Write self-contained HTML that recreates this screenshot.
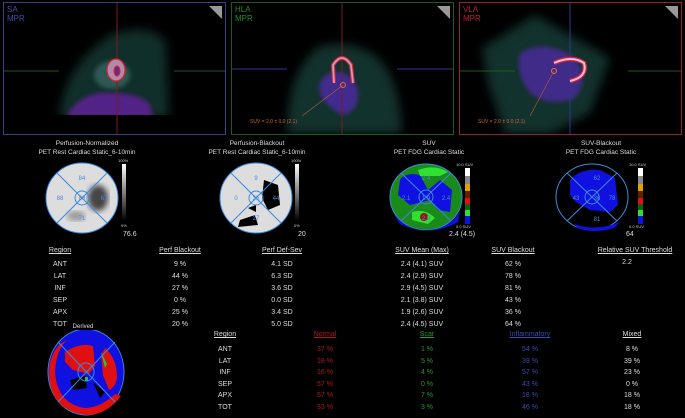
<!DOCTYPE html>
<html><head><meta charset="utf-8"><style>
body{margin:0;width:685px;height:418px;background:#000;overflow:hidden;position:relative;font-family:"Liberation Sans",sans-serif;color:#ddd;font-size:7px}
.a{position:absolute;white-space:nowrap}
.c{position:absolute;transform:translateX(-50%);white-space:nowrap;text-align:center}
.p{position:absolute;top:2px;height:131px;overflow:hidden;background:#000}
.u{text-decoration:underline}
</style></head><body>
<div class="p" style="left:3px;width:221px;border:1px solid #3b3f86">
<svg width="221" height="131">
<defs><filter id="b"><feGaussianBlur stdDeviation="5"/></filter><filter id="b2"><feGaussianBlur stdDeviation="2"/></filter></defs>
<path d="M55,115 Q60,60 110,30 Q150,20 162,40 L165,115 Z" fill="#123a36" opacity=".8" filter="url(#b)"/>
<path d="M62,115 Q70,95 95,90 Q130,88 145,100 L150,115 Z" fill="#5a2090" opacity=".9" filter="url(#b2)"/>
<ellipse cx="108" cy="72" rx="18" ry="14" fill="#3a6a68" opacity=".7" filter="url(#b2)"/>
<rect x="40" y="112" width="140" height="20" fill="#000"/>
<line x1="113" y1="0" x2="113" y2="131" stroke="#7a1a2a"/>
<line x1="0" y1="68" x2="55" y2="68" stroke="#1e5a1e"/><line x1="170" y1="68" x2="221" y2="68" stroke="#1e5a1e"/>
<ellipse cx="112" cy="67" rx="9" ry="11" fill="#b08aa8" stroke="#e02030" stroke-width="1.2"/>
<ellipse cx="113" cy="68" rx="3" ry="5" fill="#6a2a8a" stroke="#e02030"/>
<polygon points="205,3 218,3 218,16" fill="#999"/>
</svg>
<div class="a" style="left:3px;top:2px;color:#4a4ab0;font-size:8px;line-height:9px">SA<br>MPR</div></div>
<div class="p" style="left:231px;width:221px;border:1px solid #1e5a1e">
<svg width="221" height="131">
<path d="M55,131 Q55,70 85,45 Q110,35 140,50 Q168,70 170,131 Z" fill="#123a36" opacity=".85" filter="url(#b)"/>
<path d="M88,80 Q95,65 112,70 Q130,80 125,100 Q115,120 100,105 Q85,95 88,80 Z" fill="#4a2a98" opacity=".9" filter="url(#b2)"/>
<line x1="110" y1="0" x2="110" y2="131" stroke="#7a1a2a"/>
<line x1="0" y1="66" x2="55" y2="66" stroke="#2a3a90"/><line x1="165" y1="66" x2="221" y2="66" stroke="#2a3a90"/>
<path d="M102,80 L101,62 Q110,48 119,62 L121,80" fill="none" stroke="#e02030" stroke-width="4"/>
<path d="M102,80 L101,62 Q110,48 119,62 L121,80" fill="none" stroke="#c0a0c8" stroke-width="1.8"/>
<circle cx="111" cy="82" r="2.5" fill="none" stroke="#e07050"/>
<line x1="111" y1="82" x2="70" y2="113" stroke="#b06040" stroke-width=".6"/>
<text x="18" y="120" fill="#d06040" font-size="5">SUV = 2.0 ± 0.0 (2.1)</text>
<polygon points="205,3 218,3 218,16" fill="#999"/>
</svg>
<div class="a" style="left:3px;top:2px;color:#2a8a2a;font-size:8px;line-height:9px">HLA<br>MPR</div></div>
<div class="p" style="left:459px;width:221px;border:1px solid #9a2030">
<svg width="221" height="131">
<polygon points="22,45 75,12 150,55 130,110 90,131 45,131 28,80" fill="#123a36" opacity=".85" filter="url(#b)"/>
<path d="M60,50 Q85,35 115,55 Q130,75 115,95 Q90,105 70,90 Q55,70 60,50 Z" fill="#4a2a98" opacity=".85" filter="url(#b2)"/>
<line x1="110" y1="0" x2="110" y2="131" stroke="#2a3a90"/>
<line x1="0" y1="68" x2="55" y2="68" stroke="#1e5a1e"/><line x1="168" y1="68" x2="221" y2="68" stroke="#1e5a1e"/>
<path d="M94,60 Q112,52 124,60 Q128,74 110,78" fill="none" stroke="#e02030" stroke-width="4.5"/>
<path d="M94,60 Q112,52 124,60 Q128,74 110,78" fill="none" stroke="#e0c0e0" stroke-width="2"/>
<circle cx="94" cy="68" r="2.5" fill="none" stroke="#e07050"/>
<line x1="94" y1="68" x2="70" y2="113" stroke="#b06040" stroke-width=".6"/>
<text x="18" y="120" fill="#d06040" font-size="5">SUV = 2.0 ± 0.0 (2.1)</text>
<polygon points="205,3 218,3 218,16" fill="#999"/>
</svg>
<div class="a" style="left:3px;top:2px;color:#c02030;font-size:8px;line-height:9px">VLA<br>MPR</div></div>

<div class="c" style="left:87px;top:139px;line-height:9px;font-size:6.5px">Perfusion-Normalized<br>PET Rest Cardiac Static_6-10min</div>
<div class="c" style="left:257px;top:139px;line-height:9px;font-size:6.5px">Perfusion-Blackout<br>PET Rest Cardiac Static_6-10min</div>
<div class="c" style="left:429px;top:139px;line-height:9px;font-size:6.5px">SUV<br>PET FDG Cardiac Static</div>
<div class="c" style="left:601px;top:139px;line-height:9px;font-size:6.5px">SUV-Blackout<br>PET FDG Cardiac Static</div>

<svg class="a" style="left:0;top:150px" width="685" height="90">
<defs><filter id="s"><feGaussianBlur stdDeviation="3"/></filter>
<linearGradient id="g" x1="0" y1="0" x2="0" y2="1"><stop offset="0" stop-color="#fff"/><stop offset="1" stop-color="#000"/></linearGradient></defs>
<g stroke="#3a8ae0" stroke-width="1">
<ellipse cx="82" cy="48" rx="36" ry="35" fill="#ddd"/>
<ellipse cx="98" cy="48" rx="10" ry="13" fill="#444" filter="url(#s)" stroke="none"/>
<ellipse cx="76" cy="66" rx="9" ry="5" fill="#999" filter="url(#s)" stroke="none"/>
<line x1="57" y1="23" x2="107" y2="73"/><line x1="107" y1="23" x2="57" y2="73"/><ellipse cx="82" cy="48" rx="7" ry="7" fill="none"/>
<ellipse cx="256" cy="48" rx="36" ry="35" fill="#ddd"/>
<path d="M264,30 L278,35 L280,55 L268,60 L262,48 Z M240,70 L255,65 L258,75 L238,77 Z M248,58 L256,55 L256,62 Z" fill="#000" stroke="none"/>
<line x1="231" y1="23" x2="281" y2="73"/><line x1="281" y1="23" x2="231" y2="73"/><ellipse cx="256" cy="48" rx="7" ry="7" fill="none"/>
<ellipse cx="426" cy="47" rx="36" ry="33" fill="#1a8a1a"/>
<path d="M400,30 Q405,22 420,25 L428,40 L440,30 L452,40 L450,62 L438,60 L430,50 L410,55 L398,45 Z" fill="#1010e0" stroke="none"/>
<path d="M418,20 Q435,14 448,22 L440,26 L420,26 Z" fill="#30e030" stroke="none"/>
<path d="M412,62 Q425,58 435,68 L428,74 L412,70 Z" fill="#30e030" stroke="none"/>
<ellipse cx="424" cy="67" rx="4" ry="4" fill="#a01010" stroke="none"/>
<path d="M392,62 Q405,80 426,80 Q448,80 460,62 L458,72 Q430,88 400,74 Z" fill="#1010e0" stroke="none"/>
<line x1="401" y1="23" x2="451" y2="71"/><line x1="451" y1="23" x2="401" y2="71"/><ellipse cx="426" cy="47" rx="7" ry="7" fill="none"/>
<ellipse cx="592" cy="47" rx="36" ry="33" fill="#000"/>
<path d="M570,30 Q580,18 600,20 L615,28 L618,55 L610,62 L590,60 L576,52 L570,45 Z M575,74 Q595,82 620,72 L614,78 Q595,84 577,78 Z" fill="#1010e0" stroke="none"/>
<line x1="567" y1="23" x2="617" y2="71"/><line x1="617" y1="23" x2="567" y2="71"/><ellipse cx="592" cy="47" rx="7" ry="7" fill="none"/>
</g>
<g fill="#4a8ae0" font-size="6" text-anchor="middle">
<text x="82" y="30">84</text><text x="60" y="50">88</text><text x="82" y="50">88</text><text x="104" y="50">67</text><text x="82" y="70">71</text>
<text x="256" y="30">9</text><text x="236" y="50">0</text><text x="256" y="50">35</text><text x="276" y="50">44</text><text x="256" y="70">27</text>
<text x="426" y="30">2.4</text><text x="406" y="50">2.1</text><text x="426" y="50">1.9</text><text x="446" y="50">2.4</text><text x="426" y="70">2.9</text>
<text x="597" y="30">62</text><text x="576" y="50">43</text><text x="597" y="50">36</text><text x="612" y="50">78</text><text x="597" y="71">81</text>
</g>
<rect x="122" y="14" width="4" height="57" fill="url(#g)"/>
<rect x="295" y="14" width="4" height="57" fill="url(#g)"/>
<g><rect x="465" y="18" width="5" height="8" fill="#fff"/><rect x="465" y="26" width="5" height="8" fill="#888"/><rect x="465" y="34" width="5" height="7" fill="#e0a000"/><rect x="465" y="41" width="5" height="7" fill="#602000"/><rect x="465" y="48" width="5" height="6" fill="#e01010"/><rect x="465" y="54" width="5" height="6" fill="#106010"/><rect x="465" y="60" width="5" height="6" fill="#30e030"/><rect x="465" y="66" width="5" height="8" fill="#1010e0"/></g>
<g><rect x="638" y="18" width="5" height="8" fill="#fff"/><rect x="638" y="26" width="5" height="8" fill="#888"/><rect x="638" y="34" width="5" height="7" fill="#e0a000"/><rect x="638" y="41" width="5" height="7" fill="#602000"/><rect x="638" y="48" width="5" height="6" fill="#e01010"/><rect x="638" y="54" width="5" height="6" fill="#106010"/><rect x="638" y="60" width="5" height="6" fill="#30e030"/><rect x="638" y="66" width="5" height="8" fill="#1010e0"/></g>
<g fill="#ccc" font-size="4"><text x="118" y="12">100%</text><text x="121" y="77">0%</text><text x="291" y="12">100%</text><text x="294" y="77">0%</text><text x="456" y="16">10.0 SUV</text><text x="456" y="78">0.0 SUV</text><text x="629" y="16">10.0 SUV</text><text x="629" y="78">0.0 SUV</text></g>
<g fill="#ddd" font-size="7"><text x="123" y="86">76.6</text><text x="298" y="86">20</text><text x="449" y="86">2.4 (4.5)</text><text x="626" y="86">64</text></g>
</svg>

<div class="c u" style="left:60px;top:247px">Region</div>
<div class="c u" style="left:180px;top:247px">Perf Blackout</div>
<div class="c u" style="left:282px;top:247px">Perf Def-Sev</div>
<div class="c u" style="left:422px;top:247px">SUV Mean (Max)</div>
<div class="c u" style="left:513px;top:247px">SUV Blackout</div>
<div class="c u" style="left:635px;top:247px">Relative SUV Threshold</div>
<div class="c" style="left:60px;top:259px;line-height:12px">ANT<br>LAT<br>INF<br>SEP<br>APX<br>TOT</div>
<div class="c" style="left:180px;top:259px;line-height:12px">9 %<br>44 %<br>27 %<br>0 %<br>25 %<br>20 %</div>
<div class="c" style="left:282px;top:259px;line-height:12px">4.1 SD<br>6.3 SD<br>3.6 SD<br>0.0 SD<br>3.4 SD<br>5.0 SD</div>
<div class="c" style="left:422px;top:259px;line-height:12px">2.4 (4.1) SUV<br>2.4 (2.9) SUV<br>2.9 (4.5) SUV<br>2.1 (3.8) SUV<br>1.9 (2.6) SUV<br>2.4 (4.5) SUV</div>
<div class="c" style="left:513px;top:259px;line-height:12px">62 %<br>78 %<br>81 %<br>43 %<br>36 %<br>64 %</div>
<div class="c" style="left:627px;top:259px">2.2</div>

<div class="c" style="left:83px;top:324px;font-size:6px">Derived</div>
<svg class="a" style="left:45px;top:330px" width="85" height="88">
<ellipse cx="41" cy="42" rx="38" ry="43" fill="#1010e0" stroke="#3a8ae0"/>
<path d="M4,42 Q4,80 41,85 Q62,85 76,66 L70,64 Q55,78 40,78 Q12,74 10,42 Q11,20 22,10 L15,14 Q4,26 4,42 Z" fill="#e01010"/>
<path d="M20,22 Q35,12 48,16 L50,36 L44,44 L28,40 L20,32 Z" fill="#e01010"/>
<path d="M60,18 Q72,28 72,48 Q70,58 64,60 L58,45 L56,25 Z" fill="#e01010"/>
<path d="M25,50 L40,46 L42,58 L28,60 Z M48,52 L60,62 L55,68 Z" fill="#000"/>
<path d="M56,22 L62,34 L60,38 Z" fill="#30c030"/>
<rect x="40" y="47" width="3" height="4" fill="#30c030"/>
<g stroke="#3a8ae0" fill="none"><line x1="13" y1="12" x2="70" y2="72"/><line x1="70" y1="12" x2="13" y2="72"/><ellipse cx="41" cy="42" rx="8" ry="9"/></g>
</svg>

<div class="c u" style="left:225px;top:331px">Region</div>
<div class="c u" style="left:325px;top:331px;color:#b01818">Normal</div>
<div class="c u" style="left:427px;top:331px;color:#2a9a2a">Scar</div>
<div class="c u" style="left:530px;top:331px;color:#3a4ab0">Inflammatory</div>
<div class="c u" style="left:632px;top:331px">Mixed</div>
<div class="c" style="left:225px;top:344px;line-height:11.6px">ANT<br>LAT<br>INF<br>SEP<br>APX<br>TOT</div>
<div class="c" style="left:325px;top:344px;line-height:11.6px;color:#b01818">37 %<br>18 %<br>16 %<br>57 %<br>57 %<br>33 %</div>
<div class="c" style="left:427px;top:344px;line-height:11.6px;color:#2a9a2a">1 %<br>5 %<br>4 %<br>0 %<br>7 %<br>3 %</div>
<div class="c" style="left:530px;top:344px;line-height:11.6px;color:#3a4ab0">54 %<br>39 %<br>57 %<br>43 %<br>18 %<br>46 %</div>
<div class="c" style="left:632px;top:344px;line-height:11.6px">8 %<br>39 %<br>23 %<br>0 %<br>18 %<br>18 %</div>
</body></html>
